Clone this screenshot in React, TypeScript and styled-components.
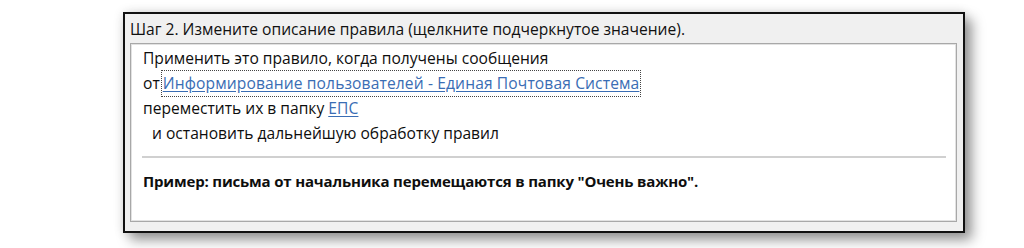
import React from "react";
import styled, { createGlobalStyle } from "styled-components";

const Global = createGlobalStyle`
  html, body { margin: 0; padding: 0; background: #ffffff; }
  body { font-family: "Open Sans", "Noto Sans", sans-serif; }
`;

const Page = styled.div`
  width: 1024px;
  height: 248px;
  padding: 12px 0 0 123px;
  box-sizing: border-box;
`;

const Window = styled.div`
  width: 842px;
  height: 221px;
  box-sizing: border-box;
  border: 2px solid #111111;
  background: #f0f0f0;
  display: flex;
  flex-direction: column;
  box-shadow: 7px 7px 12px rgba(0, 0, 0, 0.4), 0 0 10px rgba(0, 0, 0, 0.12);
`;

const Title = styled.div`
  height: 29px;
  box-sizing: border-box;
  padding: 5px 0 0 5px;
  font-size: 15.6px;
  line-height: 20px;
  color: #111111;
  white-space: nowrap;
`;

const Description = styled.div`
  flex: 1;
  margin: 0 6px 9px 5px;
  background: #ffffff;
  border: 1px solid #a8a8a8;
  box-shadow: inset 0 0 0 1px #e2e2e2;
  padding: 2px 10px 0 12px;
  display: flex;
  flex-direction: column;
  font-size: 15.6px;
  line-height: 25px;
  color: #0e0e0e;
`;

const Line = styled.div<{ $indent?: number }>`
  white-space: nowrap;
  padding-left: ${(p) => p.$indent ?? 0}px;
`;

const ValueLink = styled.a<{ $focused?: boolean }>`
  display: inline-block;
  color: #3a6db4;
  text-decoration: underline;
  text-underline-offset: 2px;
  letter-spacing: 0.12px;
  line-height: 25px;
  padding: 0 1px;
  margin: -1px 0 -1px ${(p) => (p.$focused ? 1 : 2)}px;
  border: 1px dotted ${(p) => (p.$focused ? "#444444" : "transparent")};
  cursor: pointer;
`;

const Separator = styled.div`
  height: 0;
  border-top: 2px solid #d0d0d0;
  margin: 10px 0 11px -1px;
`;

const Example = styled.div`
  font-size: 15px;
  font-weight: 700;
  letter-spacing: -0.17px;
  white-space: nowrap;
  color: #0e0e0e;
`;

export default function App() {
  return (
    <>
      <Global />
      <Page>
        <Window>
          <Title>Шаг 2. Измените описание правила (щелкните подчеркнутое значение).</Title>
          <Description>
            <Line>Применить это правило, когда получены сообщения</Line>
            <Line>
              от<ValueLink $focused>Информирование пользователей - Единая Почтовая Система</ValueLink>
            </Line>
            <Line>
              переместить их в папку<ValueLink>ЕПС</ValueLink>
            </Line>
            <Line $indent={9}>и остановить дальнейшую обработку правил</Line>
            <Separator />
            <Example>Пример: письма от начальника перемещаются в папку "Очень важно".</Example>
          </Description>
        </Window>
      </Page>
    </>
  );
}
